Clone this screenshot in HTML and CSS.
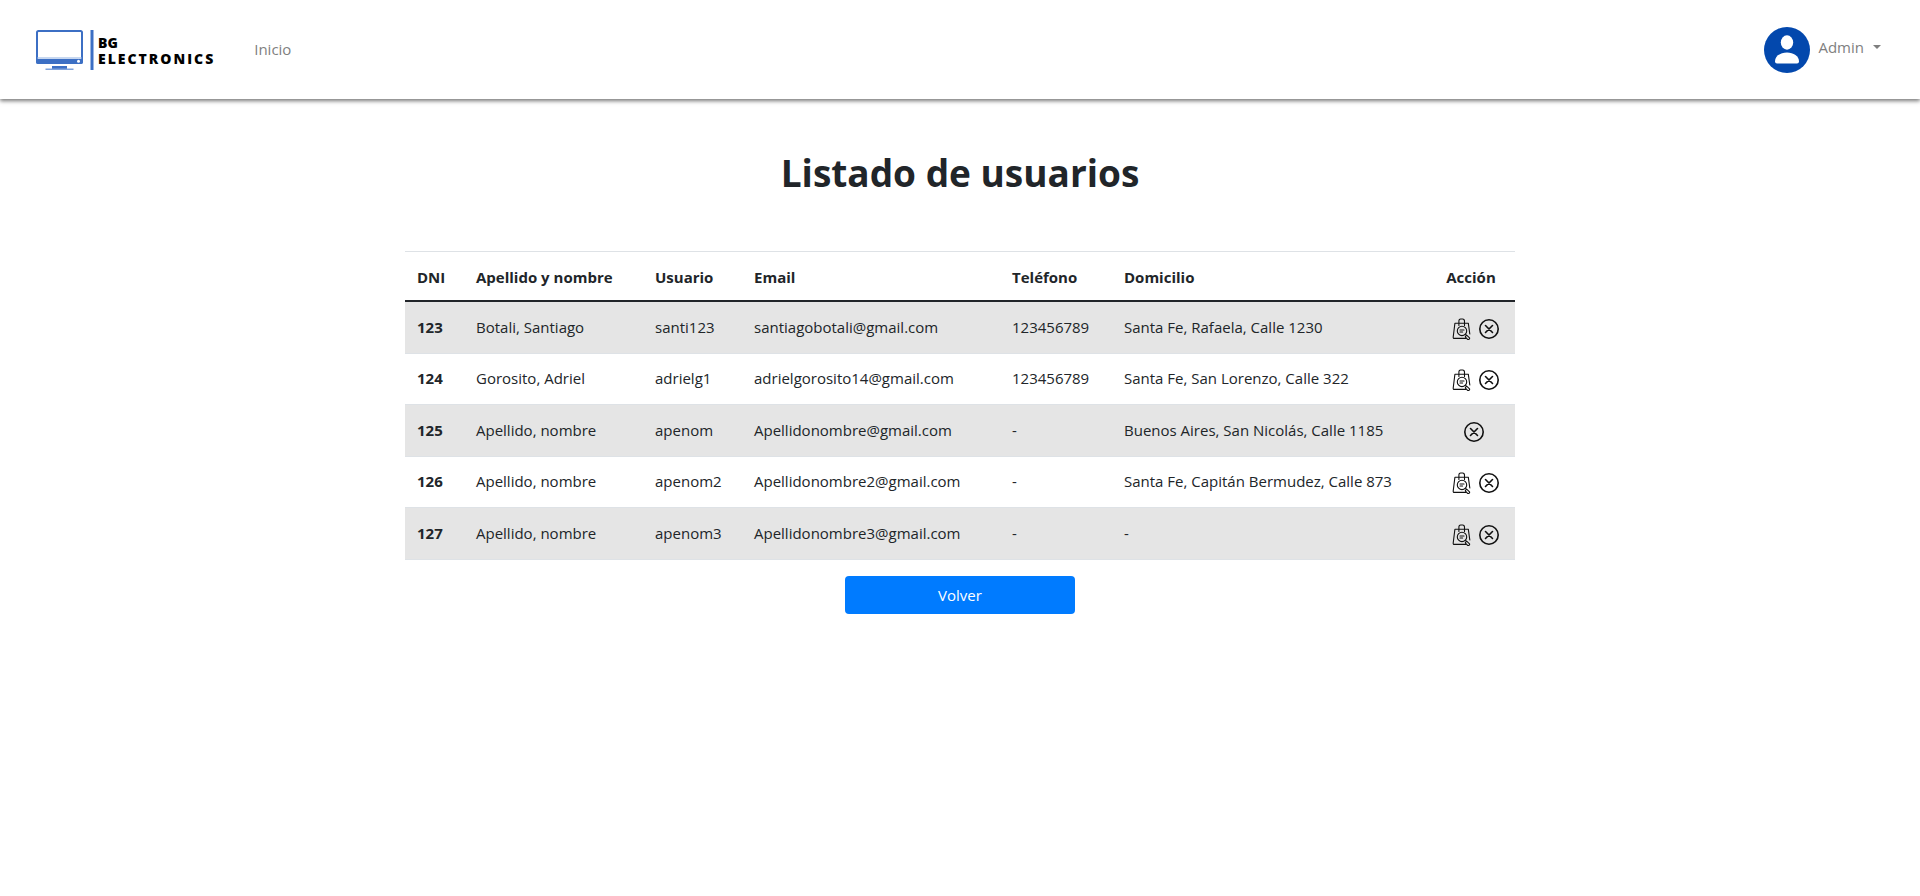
FILE: index.html
```html
<!DOCTYPE html>
<html lang="es">
<head>
<meta charset="utf-8">
<meta name="viewport" content="width=device-width, initial-scale=1">
<title>Listado de usuarios</title>
<link rel="stylesheet" href="styles.css">
</head>
<body>
<svg class="sprite" aria-hidden="true">
  <symbol id="bag" viewBox="0 0 20 22">
    <g fill="none" stroke="#111" stroke-width="1.1" stroke-linecap="round" stroke-linejoin="round">
      <path d="M6.900 7.500V3.200Q6.900 1 8.600 1h2q1.900 0 1.900 2.200v4.300"/>
      <path d="M13.500 20.400H2.400Q1 20.400 1.200 19L2.900 5.200h13.400L17.800 16"/>
      <circle cx="10" cy="12.900" r="4.700"/>
      <path d="M8 12h4M8 14h2.600"/>
      <path d="M13.600 16.500l1 .900" />
      <rect x="14" y="17.200" width="4.600" height="2.400" rx="1" transform="rotate(44 14.500 18)"/>
    </g>
  </symbol>
  <symbol id="remove" viewBox="0 0 20 20">
    <g fill="none" stroke="#111" stroke-width="1.600" stroke-linecap="round">
      <circle cx="10" cy="10" r="9.200"/>
      <path d="M6.500 6.500l7 7M13.500 6.500l-7 7"/>
    </g>
  </symbol>
</svg>

<header class="navbar">
  <a class="brand" href="#" aria-label="BG Electronics">
    <svg class="brand-mark" viewBox="0 0 58 40" aria-hidden="true">
      <rect x="1" y="1" width="45" height="32" rx="1.500" fill="#fff" stroke="#3c6fc4" stroke-width="2"/>
      <path d="M1 28h45" stroke="#8fb0e2"/>
      <path d="M0 29h47v3q0 2-2 2H2q-2 0-2-2z" fill="#3c6fc4"/>
      <circle cx="42.500" cy="31.300" r="1.500" fill="#fff"/>
      <path d="M16 36h15v3H16z" fill="#3c6fc4"/>
      <path d="M9.500 38.500h28V40H9.500z" fill="#7fa3dc"/>
      <path d="M54.500 0h3v40h-3z" fill="#3c6fc4"/>
    </svg>
    <span class="brand-name"><span>BG</span><span class="brand-wide">ELECTRONICS</span></span>
  </a>
  <nav class="nav-links"><a class="nav-link" href="#">Inicio</a></nav>
  <button class="user-menu" type="button">
    <svg class="avatar" viewBox="0 0 46 46" aria-hidden="true">
      <circle cx="23" cy="23" r="23" fill="#0348ad"/>
      <ellipse cx="23" cy="15.500" rx="6.200" ry="7.200" fill="#fff"/>
      <path d="M11 34.500C11 29 16.500 25.500 23 25.500S35 29 35 34.500q0 2-2 2H13q-2 0-2-2z" fill="#fff"/>
    </svg>
    <span class="user-name">Admin<span class="caret"></span></span>
  </button>
</header>

<main class="container">
  <h1 class="title">Listado de usuarios</h1>
  <table class="users">
    <colgroup>
      <col class="c-dni"><col class="c-name"><col class="c-user"><col class="c-mail"><col class="c-phone"><col class="c-address"><col class="c-action">
    </colgroup>
    <thead>
      <tr><th scope="col">DNI</th><th scope="col">Apellido y nombre</th><th scope="col">Usuario</th><th scope="col">Email</th><th scope="col">Teléfono</th><th scope="col">Domicilio</th><th scope="col" class="action">Acción</th></tr>
    </thead>
    <tbody>
      <tr><th scope="row">123</th><td>Botali, Santiago</td><td>santi123</td><td>santiagobotali@gmail.com</td><td>123456789</td><td>Santa Fe, Rafaela, Calle 1230</td>
        <td class="action"><div class="actions"><button type="button" aria-label="Ver compras"><svg class="i-bag"><use href="#bag"/></svg></button><button type="button" aria-label="Eliminar"><svg class="i-remove"><use href="#remove"/></svg></button></div></td></tr>
      <tr><th scope="row">124</th><td>Gorosito, Adriel</td><td>adrielg1</td><td>adrielgorosito14@gmail.com</td><td>123456789</td><td>Santa Fe, San Lorenzo, Calle 322</td>
        <td class="action"><div class="actions"><button type="button" aria-label="Ver compras"><svg class="i-bag"><use href="#bag"/></svg></button><button type="button" aria-label="Eliminar"><svg class="i-remove"><use href="#remove"/></svg></button></div></td></tr>
      <tr><th scope="row">125</th><td>Apellido, nombre</td><td>apenom</td><td>Apellidonombre@gmail.com</td><td>-</td><td>Buenos Aires, San Nicolás, Calle 1185</td>
        <td class="action"><div class="actions single"><button type="button" aria-label="Eliminar"><svg class="i-remove"><use href="#remove"/></svg></button></div></td></tr>
      <tr><th scope="row">126</th><td>Apellido, nombre</td><td>apenom2</td><td>Apellidonombre2@gmail.com</td><td>-</td><td>Santa Fe, Capitán Bermudez, Calle 873</td>
        <td class="action"><div class="actions"><button type="button" aria-label="Ver compras"><svg class="i-bag"><use href="#bag"/></svg></button><button type="button" aria-label="Eliminar"><svg class="i-remove"><use href="#remove"/></svg></button></div></td></tr>
      <tr><th scope="row">127</th><td>Apellido, nombre</td><td>apenom3</td><td>Apellidonombre3@gmail.com</td><td>-</td><td>-</td>
        <td class="action"><div class="actions"><button type="button" aria-label="Ver compras"><svg class="i-bag"><use href="#bag"/></svg></button><button type="button" aria-label="Eliminar"><svg class="i-remove"><use href="#remove"/></svg></button></div></td></tr>
    </tbody>
  </table>
  <a class="back" href="#">Volver</a>
</main>
</body>
</html>
```
FILE: styles.css
```css
*, *::before, *::after { box-sizing: border-box; }
body {
  margin: 0;
  background: #fff;
  color: #212529;
  font: 15px/24px "Segoe UI", "Open Sans", "Noto Sans", sans-serif;
}
a { text-decoration: none; }
button { padding: 0; border: 0; background: none; font: inherit; color: inherit; cursor: pointer; }
.sprite { display: block; width: 0; height: 0; }

.navbar {
  display: flex;
  align-items: center;
  min-height: 99px;
  padding: 0 39px 0 36px;
  box-shadow: 0 2px 4px #777;
}
.brand { display: flex; align-items: center; gap: 4px; color: #000; }
.brand-mark { width: 58px; height: 40px; }
.brand-name {
  display: flex;
  flex-direction: column;
  padding-top: 2px;
  font: 800 14px/16px "Open Sans", "Noto Sans", sans-serif;
}
.brand-wide { letter-spacing: 2px; }
.nav-links { flex: 1; margin-left: 39px; padding-bottom: 2px; }
.nav-link, .user-menu { color: #7f7f7f; }
.user-menu { display: flex; gap: 8px; padding-top: 1px; }
.avatar { width: 46px; height: 46px; }
.user-name { display: flex; align-items: center; gap: 9px; height: 40px; }
.caret { border: 4px solid transparent; border-top-color: currentColor; border-bottom: 0; }

.container { max-width: 1110px; margin: 0 auto; }
.title { margin: 46px 0 50px; font-size: 37px; line-height: 56px; font-weight: 700; text-align: center; }

.users { width: 100%; table-layout: fixed; border-collapse: separate; border-spacing: 0; border-top: 1px solid #dee2e6; }
.c-dni { width: 59px; }
.c-name { width: 179px; }
.c-user { width: 99px; }
.c-mail { width: 258px; }
.c-phone { width: 112px; }
.c-action { width: 88px; }
.users th, .users td { height: 51px; padding: 0 12px 2px; text-align: left; vertical-align: middle; white-space: nowrap; }
.users thead th { height: 50px; padding: 2px 12px 0; border-bottom: 2px solid #212529; }
.users tbody th, .users tbody td { border-bottom: 1px solid #dee2e6; }
.users tbody tr:nth-child(odd) > * { height: 52px; background: #e5e5e5; }
.users .action { text-align: center; }
.actions { display: flex; justify-content: flex-end; align-items: center; gap: 7px; padding: 4px 4px 0 0; }
.actions.single { justify-content: center; padding: 4px 0 0 6px; }
.actions button { display: flex; }
.i-bag { width: 20px; height: 22px; }
.i-remove { width: 20px; height: 20px; }

.back {
  display: block;
  width: 230px;
  margin: 16px auto;
  padding: 7px;
  border-radius: 4px;
  background: #007bff;
  color: #fff;
  text-align: center;
}
```
